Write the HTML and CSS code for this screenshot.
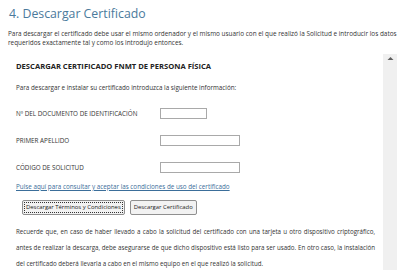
FILE: index.html
```html
<!DOCTYPE html>
<html lang="es">
<head>
<meta charset="utf-8">
<title>Descargar Certificado</title>
<link rel="stylesheet" href="styles.css">
</head>
<body>
<h1 class="title">4. Descargar Certificado</h1>
<p class="intro">Para descargar el certificado debe usar el mismo ordenador y el mismo usuario con el que realizó la Solicitud e introducir los datos requeridos exactamente tal y como los introdujo entonces.</p>
<div class="frame">
  <div class="content">
    <h2 class="section">DESCARGAR CERTIFICADO FNMT DE PERSONA FÍSICA</h2>
    <p class="lead">Para descargar e instalar su certificado introduzca la siguiente información:</p>
    <div class="row"><span class="label">Nº DEL DOCUMENTO DE IDENTIFICACIÓN</span><span class="input short"></span></div>
    <div class="row"><span class="label">PRIMER APELLIDO</span><span class="input"></span></div>
    <div class="row"><span class="label">CÓDIGO DE SOLICITUD</span><span class="input"></span></div>
    <a class="link" href="#">Pulse aquí para consultar y aceptar las condiciones de uso del certificado</a>
    <div class="buttons">
      <button class="btn focused">Descargar Términos y Condiciones</button>
      <button class="btn">Descargar Certificado</button>
    </div>
    <p class="note">Recuerde que, en caso de haber llevado a cabo la solicitud del certificado con una tarjeta u otro dispositivo criptográfico, antes de realizar la descarga, debe asegurarse de que dicho dispositivo está listo para ser usado. En otro caso, la instalación del certificado deberá llevarla a cabo en el mismo equipo en el que realizó la solicitud.</p>
  </div>
  <div class="scrollbar">
    <svg class="arrow" width="7" height="5" viewBox="0 0 7 5"><path d="M0.5 4 L3.5 1 L6.5 4 Z" fill="#606060"/></svg>
  </div>
</div>
</body>
</html>
```
FILE: styles.css
```css
html, body {
  margin: 0;
  padding: 0;
  background: #ffffff;
}
html {
  height: 270px;
  overflow: hidden;
}
body {
  padding: 0 3px 0 8px;
  font-family: "Open Sans", "Noto Sans", sans-serif;
  color: #333333;
  overflow: hidden;
  height: 270px;
  box-sizing: border-box;
  display: flex;
  flex-direction: column;
}
.title {
  margin: 3px 0 0 1px;
  font-size: 12.3px;
  line-height: 22px;
  font-weight: 400;
  color: #4b7a9c;
}
.intro {
  margin: 4px 0 0 0;
  font-size: 6.4px;
  line-height: 9px;
  color: #333333;
}
.frame {
  margin-top: 7px;
  display: flex;
  flex: 1;
  min-height: 0;
  overflow: hidden;
}
.content {
  flex: 1;
  min-width: 0;
  overflow: hidden;
  padding: 6px 8px 0 8px;
  font-size: 6.3px;
  color: #333333;
}
.section {
  margin: 0;
  font-size: 7.6px;
  line-height: 12px;
  font-weight: 700;
  color: #222222;
}
.lead {
  margin: 11px 0 0 0;
  line-height: 9px;
}
.row {
  display: grid;
  grid-template-columns: 144px auto;
  align-items: center;
  margin-top: 16px;
}
.row + .row {
  margin-top: 16px;
}
.label {
  line-height: 10px;
}
.input {
  display: block;
  width: 78px;
  height: 9px;
  border: 1px solid #a9a9a9;
  background: #ffffff;
}
.input.short {
  width: 45px;
}
.link {
  display: block;
  margin-top: 9px;
  line-height: 9px;
  color: #3b6e9a;
  text-decoration: underline;
}
.buttons {
  display: flex;
  gap: 5px;
  margin-top: 9px;
  padding-left: 6px;
}
.btn {
  font-family: inherit;
  font-size: 5.9px;
  line-height: 9px;
  padding: 2px 3px;
  color: #222222;
  background: #f2f2f2;
  border: 1px solid #8f8f8f;
  border-radius: 2px;
}
.btn.focused {
  outline: 1px dotted #333333;
  outline-offset: -3px;
}
.note {
  margin: 9px 0 0 0;
  font-size: 6.2px;
  line-height: 16px;
  text-align: justify;
}
.scrollbar {
  width: 14px;
  flex: none;
  background: #f0f0f0;
  display: flex;
  justify-content: center;
  padding-top: 2px;
  box-sizing: border-box;
}
.arrow {
  display: block;
}
```
